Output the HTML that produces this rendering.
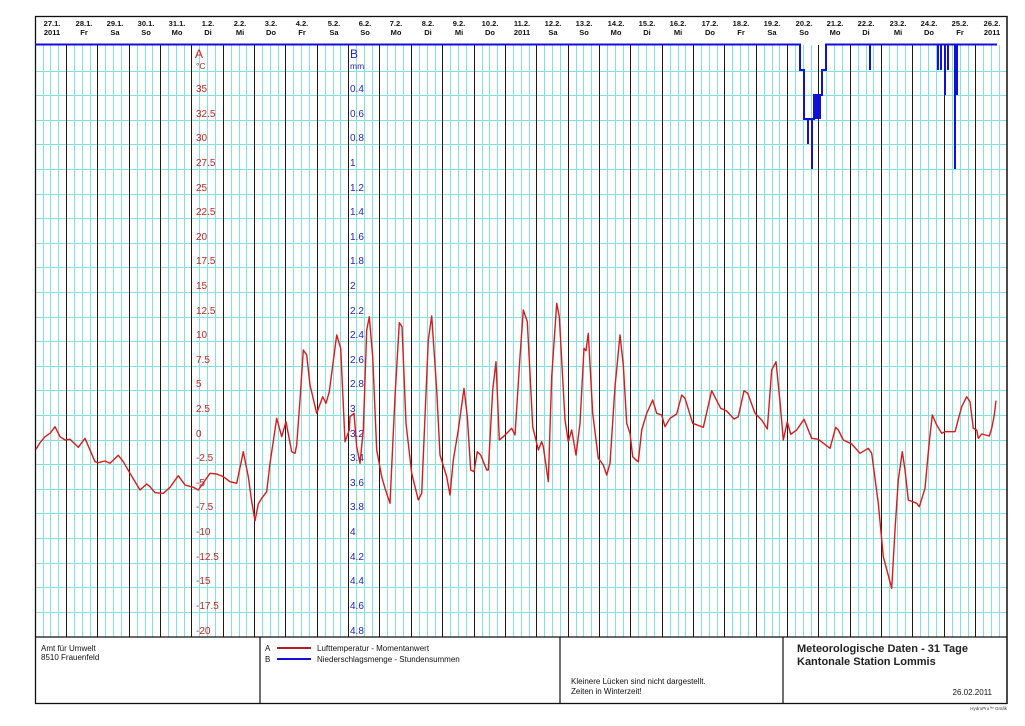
<!DOCTYPE html>
<html><head><meta charset="utf-8"><style>
html,body{margin:0;padding:0;background:#fff;}
svg{display:block;font-family:"Liberation Sans",Arial,sans-serif;}
</style></head><body>
<svg width="1025" height="726" viewBox="0 0 1025 726" xmlns="http://www.w3.org/2000/svg">
<rect x="0" y="0" width="1025" height="726" fill="#fff"/>
<path stroke="#7fe3e3" stroke-width="1" fill="none" d="M43.5 45V637M50.5 45V637M58.5 45V637M74.5 45V637M82.5 45V637M90.5 45V637M105.5 45V637M113.5 45V637M121.5 45V637M137.5 45V637M145.5 45V637M152.5 45V637M168.5 45V637M176.5 45V637M184.5 45V637M199.5 45V637M207.5 45V637M215.5 45V637M231.5 45V637M239.5 45V637M246.5 45V637M262.5 45V637M270.5 45V637M278.5 45V637M293.5 45V637M301.5 45V637M309.5 45V637M325.5 45V637M333.5 45V637M340.5 45V637M356.5 45V637M364.5 45V637M372.5 45V637M387.5 45V637M395.5 45V637M403.5 45V637M419.5 45V637M427.5 45V637M435.5 45V637M450.5 45V637M458.5 45V637M466.5 45V637M482.5 45V637M489.5 45V637M497.5 45V637M513.5 45V637M521.5 45V637M529.5 45V637M544.5 45V637M552.5 45V637M560.5 45V637M576.5 45V637M583.5 45V637M591.5 45V637M607.5 45V637M615.5 45V637M623.5 45V637M638.5 45V637M646.5 45V637M654.5 45V637M670.5 45V637M678.5 45V637M685.5 45V637M701.5 45V637M709.5 45V637M717.5 45V637M732.5 45V637M740.5 45V637M748.5 45V637M764.5 45V637M772.5 45V637M779.5 45V637M795.5 45V637M803.5 45V637M811.5 45V637M826.5 45V637M834.5 45V637M842.5 45V637M858.5 45V637M866.5 45V637M873.5 45V637M889.5 45V637M897.5 45V637M905.5 45V637M920.5 45V637M928.5 45V637M936.5 45V637M952.5 45V637M960.5 45V637M968.5 45V637M983.5 45V637M991.5 45V637M999.5 45V637"/>
<g stroke="#7fe3e3" stroke-width="1">
<line x1="35" x2="1007" y1="71.5" y2="71.5"/><line x1="35" x2="1007" y1="95.5" y2="95.5"/><line x1="35" x2="1007" y1="120.5" y2="120.5"/><line x1="35" x2="1007" y1="144.5" y2="144.5"/><line x1="35" x2="1007" y1="169.5" y2="169.5"/><line x1="35" x2="1007" y1="194.5" y2="194.5"/><line x1="35" x2="1007" y1="218.5" y2="218.5"/><line x1="35" x2="1007" y1="243.5" y2="243.5"/><line x1="35" x2="1007" y1="267.5" y2="267.5"/><line x1="35" x2="1007" y1="292.5" y2="292.5"/><line x1="35" x2="1007" y1="317.5" y2="317.5"/><line x1="35" x2="1007" y1="341.5" y2="341.5"/><line x1="35" x2="1007" y1="366.5" y2="366.5"/><line x1="35" x2="1007" y1="390.5" y2="390.5"/><line x1="35" x2="1007" y1="415.5" y2="415.5"/><line x1="35" x2="1007" y1="440.5" y2="440.5"/><line x1="35" x2="1007" y1="464.5" y2="464.5"/><line x1="35" x2="1007" y1="489.5" y2="489.5"/><line x1="35" x2="1007" y1="513.5" y2="513.5"/><line x1="35" x2="1007" y1="538.5" y2="538.5"/><line x1="35" x2="1007" y1="563.5" y2="563.5"/><line x1="35" x2="1007" y1="587.5" y2="587.5"/><line x1="35" x2="1007" y1="612.5" y2="612.5"/>
</g>
<path stroke="#1a1a1a" stroke-width="1" fill="none" d="M66.5 45V637M97.5 45V637M129.5 45V637M160.5 45V637M191.5 45V637M223.5 45V637M254.5 45V637M285.5 45V637M317.5 45V637M348.5 45V637M379.5 45V637M411.5 45V637M442.5 45V637M474.5 45V637M505.5 45V637M536.5 45V637M568.5 45V637M599.5 45V637M630.5 45V637M662.5 45V637M693.5 45V637M724.5 45V637M756.5 45V637M787.5 45V637M818.5 45V637M850.5 45V637M881.5 45V637M912.5 45V637M944.5 45V637M975.5 45V637"/>
<!-- frame -->
<rect x="35.5" y="16.5" width="971.5" height="687" fill="none" stroke="#111" stroke-width="1.3"/>
<line x1="35" x2="1007" y1="637" y2="637" stroke="#111" stroke-width="1.3"/>
<line x1="1007" x2="1007" y1="16" y2="704" stroke="#111" stroke-width="1.3"/>
<!-- header -->
<g font-size="7.5" font-weight="bold" text-anchor="middle" fill="#111">
<text x="52" y="26">27.1.</text><text x="52" y="35">2011</text>
<text x="84" y="26">28.1.</text><text x="84" y="35">Fr</text>
<text x="115" y="26">29.1.</text><text x="115" y="35">Sa</text>
<text x="146" y="26">30.1.</text><text x="146" y="35">So</text>
<text x="177" y="26">31.1.</text><text x="177" y="35">Mo</text>
<text x="208" y="26">1.2.</text><text x="208" y="35">Di</text>
<text x="240" y="26">2.2.</text><text x="240" y="35">Mi</text>
<text x="271" y="26">3.2.</text><text x="271" y="35">Do</text>
<text x="302" y="26">4.2.</text><text x="302" y="35">Fr</text>
<text x="334" y="26">5.2.</text><text x="334" y="35">Sa</text>
<text x="365" y="26">6.2.</text><text x="365" y="35">So</text>
<text x="396" y="26">7.2.</text><text x="396" y="35">Mo</text>
<text x="428" y="26">8.2.</text><text x="428" y="35">Di</text>
<text x="459" y="26">9.2.</text><text x="459" y="35">Mi</text>
<text x="490" y="26">10.2.</text><text x="490" y="35">Do</text>
<text x="522" y="26">11.2.</text><text x="522" y="35">2011</text>
<text x="553" y="26">12.2.</text><text x="553" y="35">Sa</text>
<text x="584" y="26">13.2.</text><text x="584" y="35">So</text>
<text x="616" y="26">14.2.</text><text x="616" y="35">Mo</text>
<text x="647" y="26">15.2.</text><text x="647" y="35">Di</text>
<text x="678" y="26">16.2.</text><text x="678" y="35">Mi</text>
<text x="710" y="26">17.2.</text><text x="710" y="35">Do</text>
<text x="741" y="26">18.2.</text><text x="741" y="35">Fr</text>
<text x="772" y="26">19.2.</text><text x="772" y="35">Sa</text>
<text x="804" y="26">20.2.</text><text x="804" y="35">So</text>
<text x="835" y="26">21.2.</text><text x="835" y="35">Mo</text>
<text x="866" y="26">22.2.</text><text x="866" y="35">Di</text>
<text x="898" y="26">23.2.</text><text x="898" y="35">Mi</text>
<text x="929" y="26">24.2.</text><text x="929" y="35">Do</text>
<text x="960" y="26">25.2.</text><text x="960" y="35">Fr</text>
<text x="992" y="26">26.2.</text><text x="992" y="35">2011</text>
</g>
<!-- axis A -->
<g fill="#c8241e" font-size="10">
<text x="195" y="58" font-size="12">A</text>
<text x="196" y="69" font-size="8.5">°C</text>
<text x="196" y="92">35</text><text x="196" y="117">32.5</text><text x="196" y="141">30</text><text x="196" y="166">27.5</text><text x="196" y="191">25</text><text x="196" y="215">22.5</text><text x="196" y="240">20</text><text x="196" y="264">17.5</text><text x="196" y="289">15</text><text x="196" y="314">12.5</text><text x="196" y="338">10</text><text x="196" y="363">7.5</text><text x="196" y="387">5</text><text x="196" y="412">2.5</text><text x="196" y="437">0</text><text x="196" y="461">-2.5</text><text x="196" y="486">-5</text><text x="196" y="510">-7.5</text><text x="196" y="535">-10</text><text x="196" y="560">-12.5</text><text x="196" y="584">-15</text><text x="196" y="609">-17.5</text><text x="196" y="634">-20</text>
</g>
<!-- axis B -->
<g fill="#2323c8" font-size="10">
<text x="350" y="58" font-size="12">B</text>
<text x="350" y="69" font-size="8.5">mm</text>
<text x="350" y="92">0.4</text><text x="350" y="117">0.6</text><text x="350" y="141">0.8</text><text x="350" y="166">1</text><text x="350" y="191">1.2</text><text x="350" y="215">1.4</text><text x="350" y="240">1.6</text><text x="350" y="264">1.8</text><text x="350" y="289">2</text><text x="350" y="314">2.2</text><text x="350" y="338">2.4</text><text x="350" y="363">2.6</text><text x="350" y="387">2.8</text><text x="350" y="412">3</text><text x="350" y="437">3.2</text><text x="350" y="461">3.4</text><text x="350" y="486">3.6</text><text x="350" y="510">3.8</text><text x="350" y="535">4</text><text x="350" y="560">4.2</text><text x="350" y="584">4.4</text><text x="350" y="609">4.6</text><text x="350" y="634">4.8</text>
</g>
<!-- precipitation -->
<g stroke="#1010d8" stroke-width="2" fill="none">
<polyline points="35,44.5 800,44.5 800,70 804,70 804,119 814,119 814,95 822,95 822,70 826,70 826,44.5 997,44.5"/>
<line x1="808" y1="119" x2="808" y2="144"/>
<line x1="812" y1="119" x2="812" y2="169"/>
<rect x="815" y="96" width="6" height="23" fill="#1010d8" stroke="none"/>
<line x1="870" y1="44" x2="870" y2="70"/>
<line x1="938" y1="44" x2="938" y2="70"/>
<line x1="941" y1="44" x2="941" y2="70"/>
<line x1="945" y1="44" x2="945" y2="95"/>
<line x1="948" y1="44" x2="948" y2="70"/>
<line x1="955" y1="44" x2="955" y2="169"/>
<line x1="957" y1="44" x2="957" y2="95"/>
</g>
<!-- temperature -->
<polyline fill="none" stroke="#dd1a1a" stroke-width="1.4" stroke-linejoin="round" points="36,449.3 40,442.7 45,436.7 50,433.3 55,426.7 60,436.7 65,440 70,439.3 78.3,447.3 85,438.3 95,461.7 98.3,462.7 105,461 110,463.3 118.3,455.3 123.3,461.7 130,473.3 140,490 146.7,484 150,486.7 155,492.7 163.3,493.3 170,487.3 178.3,475.7 185,485 193.3,487.3 198.3,490 210,473.3 216.7,474 223.3,476.7 230,481.7 236.7,483.3 243.3,451.7 248.3,476.7 251.7,501.7 255,520.7 258.3,504 261.7,498.3 266.7,491.7 270,463.3 276.7,418.3 281.7,436.7 286,421.7 291.7,451.7 295,453.3 296.7,445 300,400 303.3,350 306.7,355 310,385 316.7,413.3 322.7,396.7 326,403.3 329.3,391.7 336.7,335 340.7,348.3 345,441.7 349.3,430 350,416.7 354,413.3 356.7,446.7 360,463.3 363.3,430 366.7,330 369.3,316.7 372.7,356.7 376.7,450 381.7,476.7 385,488.3 390,503.3 395,396.7 399.3,322.7 402,326.7 406,423.3 411.7,473.3 418.3,500 421.7,493.3 428.3,340 431.7,316 436.7,390 440,455 446.7,476.7 450,495 453.3,460 458.3,430 464,388.3 467.3,416.7 470.7,470 474,471.7 477.3,451.7 480.7,455 486.7,470 488.3,470 492.7,390 496,361.7 499.3,440 503.3,436.7 511.7,428.3 515,435 520,356.7 523.3,310 527.3,321.7 530,373.3 532.7,426.7 538.3,450 541.7,441.7 543.3,446.7 548.3,481.7 551.7,376.7 556.7,303.3 559.3,316.7 565,420 568.3,441.7 571.7,430 576,455 580,423.3 584,348.3 586,350.7 588.3,333.3 592.7,413.3 598.3,458.3 603.3,465 606.7,475 610,463.3 615,386.7 620,335 623.3,365 626.7,423.3 630,433.3 632.7,456.7 636,460 638.3,461.7 641.7,430 646.7,413.3 652.7,400 656.7,413.3 661.7,415 665,426.7 670,418.3 676.7,414 681.7,395 685,398.3 692.7,423.3 703.3,427.3 711.7,390.7 720.7,408.3 726.7,411 734,419 738.3,416.7 744,390.7 747.7,393.3 755,413.3 761.7,420 767.3,429 771.7,370 776,361.7 780,401.7 783.3,440 787.3,421.7 790.7,434.3 796.7,430 804,419.3 811.7,438.3 818.3,439.3 830,448.3 835.7,427.3 838.3,430 843.3,440 851.7,444 860,453.3 868.3,448.3 871.7,453.3 878.3,503.3 883.3,556.7 891.7,588.3 895,530 898.3,480 902.3,451.7 905,470 908.3,500 916.7,503.3 919.3,506.7 925,488.3 929.3,441.7 932.3,415 936.7,425 941.7,433.3 945,431.7 955,431.7 961.7,406.7 966.7,396.7 970,401.7 973.3,428.3 976.7,430 978.3,438.3 981.7,434 989.3,436 991.7,428.3 994.3,415 996,400.7"/>
<!-- footer -->
<g stroke="#111" stroke-width="1.2">
<line x1="260" y1="637" x2="260" y2="704"/>
<line x1="560" y1="637" x2="560" y2="704"/>
<line x1="783" y1="637" x2="783" y2="704"/>
</g>
<g font-size="8" fill="#111">
<text x="41" y="651">Amt für Umwelt</text>
<text x="41" y="660">8510 Frauenfeld</text>
<text x="265" y="651">A</text>
<text x="265" y="662">B</text>
<text x="317" y="651">Lufttemperatur - Momentanwert</text>
<text x="317" y="662">Niederschlagsmenge - Stundensummen</text>
<text x="571" y="684">Kleinere Lücken sind nicht dargestellt.</text>
<text x="571" y="694">Zeiten in Winterzeit!</text>
<text x="992" y="695" text-anchor="end">26.02.2011</text>
</g>
<line x1="277" y1="648" x2="311" y2="648" stroke="#b02020" stroke-width="2"/>
<line x1="277" y1="659" x2="311" y2="659" stroke="#1010d8" stroke-width="2"/>
<g font-size="11" font-weight="bold" fill="#222">
<text x="797" y="652">Meteorologische Daten - 31 Tage</text>
<text x="797" y="665">Kantonale Station Lommis</text>
</g>
<text x="1007" y="710" font-size="4.5" text-anchor="end" fill="#333">HydroPro™ Grafik</text>
</svg>
</body></html>
